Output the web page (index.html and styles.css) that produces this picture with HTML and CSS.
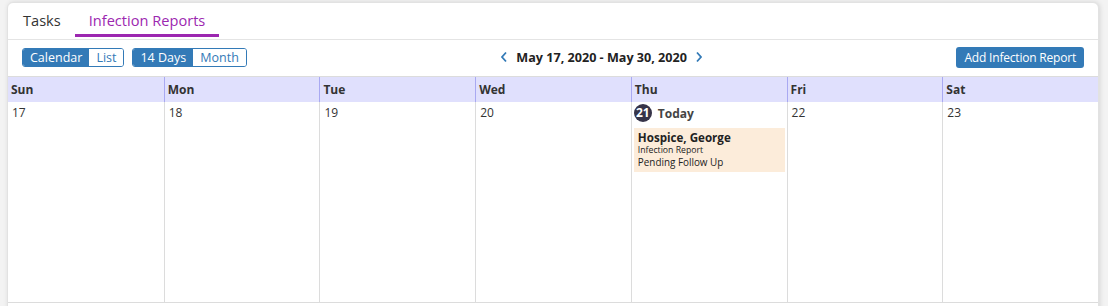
FILE: index.html
```html
<!DOCTYPE html>
<html lang="en">
<head>
    <meta charset="UTF-8">
    <meta name="viewport" content="width=device-width, initial-scale=1.0">
    <title>Infection Reports</title>
    <link rel="stylesheet" href="styles.css">
</head>
<body>
    <div class="card">
        <div class="tabs">
            <div class="tab">Tasks</div>
            <div class="tab active">Infection Reports</div>
        </div>
        <div class="toolbar">
            <div class="toolbar-left">
                <div class="btn-group">
                    <span class="seg on">Calendar</span>
                    <span class="seg">List</span>
                </div>
                <div class="btn-group">
                    <span class="seg on">14 Days</span>
                    <span class="seg">Month</span>
                </div>
            </div>
            <div class="range">
                <svg class="chev" width="8" height="12" viewBox="0 0 8 12"><path d="M6 1.5 L2 6 L6 10.5" fill="none" stroke="#337ab7" stroke-width="1.8"/></svg>
                <span>May 17, 2020 - May 30, 2020</span>
                <svg class="chev" width="8" height="12" viewBox="0 0 8 12"><path d="M2 1.5 L6 6 L2 10.5" fill="none" stroke="#337ab7" stroke-width="1.8"/></svg>
            </div>
            <button class="add-btn">Add Infection Report</button>
        </div>
        <div class="calendar">
            <div class="head">Sun</div>
            <div class="head">Mon</div>
            <div class="head">Tue</div>
            <div class="head">Wed</div>
            <div class="head">Thu</div>
            <div class="head">Fri</div>
            <div class="head">Sat</div>

            <div class="day"><span class="num">17</span></div>
            <div class="day"><span class="num">18</span></div>
            <div class="day"><span class="num">19</span></div>
            <div class="day"><span class="num">20</span></div>
            <div class="day today">
                <div class="today-label"><span class="dot">21</span> Today</div>
                <div class="event">
                    <div class="ev-name">Hospice, George</div>
                    <div class="ev-type">Infection Report</div>
                    <div class="ev-status">Pending Follow Up</div>
                </div>
            </div>
            <div class="day"><span class="num">22</span></div>
            <div class="day"><span class="num">23</span></div>
        </div>
    </div>
</body>
</html>
```

FILE: styles.css
```css
body {
    margin: 0;
    padding: 2px 9px 0 7px;
    background-color: #f3f3f3;
    font-family: "Open Sans", "Liberation Sans", Arial, sans-serif;
    color: #333;
}
.card {
    background-color: #fff;
    border: 1px solid #e2e2e2;
    border-radius: 6px;
    box-shadow: 1px 0 5px rgba(0, 0, 0, 0.12);
    height: 320px;
    overflow: hidden;
}
.tabs {
    display: flex;
    padding-left: 1px;
    border-bottom: 1px solid #e4e4e4;
}
.tab {
    padding: 6px 14px 0;
    height: 25px;
    line-height: 22px;
    font-size: 14.6px;
    color: #333;
    border-bottom: 3px solid transparent;
    margin-bottom: 2px;
}
.tab.active {
    color: #9c27b0;
    border-bottom-color: #9c27b0;
}
.toolbar {
    display: flex;
    align-items: center;
    justify-content: space-between;
    padding: 6px 14px 8px 14px;
    height: 22px;
}
.toolbar-left {
    display: flex;
    gap: 8px;
}
.btn-group {
    display: flex;
    border: 1px solid #337ab7;
    border-radius: 3px;
    overflow: hidden;
}
.seg {
    padding: 0 7px;
    height: 17px;
    line-height: 17px;
    font-size: 12.5px;
    color: #337ab7;
    background-color: #fff;
}
.seg.on {
    color: #fff;
    background-color: #337ab7;
}
.range {
    display: flex;
    align-items: center;
    gap: 8px;
    font-size: 12.6px;
    font-weight: bold;
    color: #222;
}
.add-btn {
    font-family: inherit;
    font-size: 12px;
    letter-spacing: -0.2px;
    color: #fff;
    background-color: #337ab7;
    border: none;
    border-radius: 3px;
    height: 21px;
    padding: 0 8px;
}
.calendar {
    display: grid;
    grid-template-columns: repeat(7, 1fr);
    border-top: 1px solid #dcdcdc;
}
.head {
    background-color: #e0e0fd;
    font-size: 12px;
    font-weight: bold;
    color: #333;
    padding: 4px 3px;
    line-height: 17px;
    border-left: 1px solid #a9a9f2;
}
.head:first-child {
    border-left: none;
}
.day {
    box-sizing: border-box;
    height: 201px;
    border-left: 1px solid #dcdcdc;
    border-bottom: 1px solid #dcdcdc;
    padding: 3px 2px 0 3px;
    font-size: 12px;
}
.calendar .day:nth-child(8) {
    border-left: none;
}
.num {
    display: block;
    line-height: 16px;
    padding-left: 1px;
}
.today {
    padding-top: 2px;
    padding-left: 2px;
}
.today-label {
    display: flex;
    align-items: center;
    gap: 6px;
    font-size: 12px;
    font-weight: bold;
    color: #444;
}
.dot {
    display: inline-block;
    width: 18px;
    height: 18px;
    line-height: 18px;
    border-radius: 50%;
    background-color: #363449;
    color: #fff;
    font-size: 12px;
    text-align: center;
}
.event {
    margin-top: 6px;
    background-color: #fcecda;
    padding: 2px 4px 3px;
    color: #222;
}
.ev-name {
    font-size: 11.6px;
    font-weight: bold;
    line-height: 15px;
}
.ev-type {
    font-size: 8.7px;
    line-height: 11px;
}
.ev-status {
    font-size: 9.9px;
    line-height: 13px;
}
```
